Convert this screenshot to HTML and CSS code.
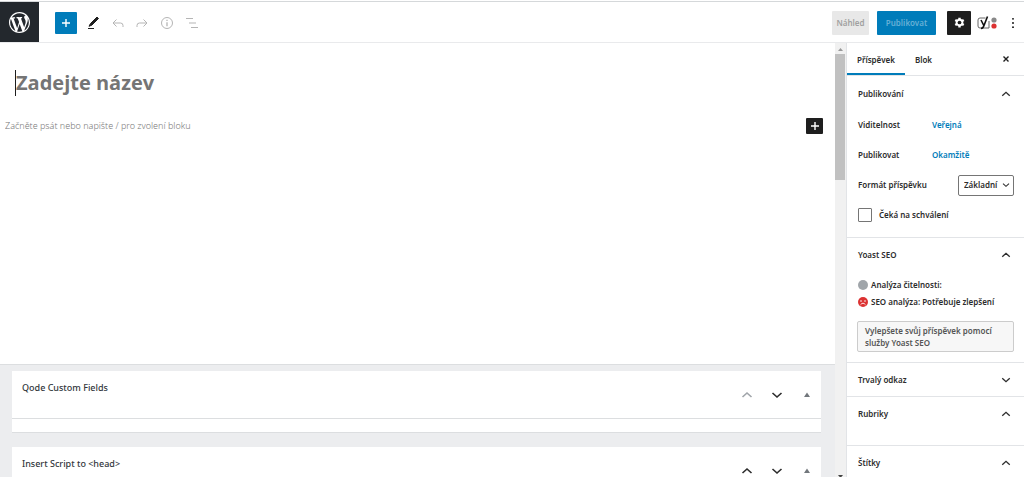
FILE: index.html
```html
<!DOCTYPE html>
<html lang="cs">
<head>
  <meta charset="UTF-8">
  <title>Nový příspěvek</title>
  <link rel="stylesheet" href="styles.css">
</head>
<body>
<svg class="sprite" aria-hidden="true">
  <symbol id="up" viewBox="0 0 12 12"><path d="M1.500 8L6 4l4.500 4" fill="none" stroke="currentColor" stroke-width="1.600"/></symbol>
  <symbol id="down" viewBox="0 0 12 12"><path d="M1.500 4L6 8l4.500-4" fill="none" stroke="currentColor" stroke-width="1.600"/></symbol>
  <symbol id="triangle" viewBox="0 0 12 12"><path d="M3 8l3-4.500L9 8z" fill="currentColor"/></symbol>
  <symbol id="plus" viewBox="0 0 12 12"><path d="M6 2v8M2 6h8" fill="none" stroke="currentColor" stroke-width="1.400"/></symbol>
</svg>

<header class="topbar">
  <a class="logo" href="#" aria-label="WordPress">
    <svg viewBox="0 0 20 20"><path fill="#fff" d="M20 10c0-5.510-4.490-10-10-10S0 4.490 0 10c0 5.520 4.490 10 10 10s10-4.480 10-10zM7.780 15.370L4.370 6.220c.55-.02 1.170-.08 1.170-.08.5-.06.44-1.130-.06-1.110 0 0-1.450.11-2.370.11-.18 0-.37 0-.58-.01C4.120 2.690 6.870 1.110 10 1.110c2.330 0 4.450.87 6.050 2.340-.68-.11-1.650.39-1.650 1.580 0 .74.45 1.360.9 2.100.35.61.55 1.360.55 2.460 0 1.490-1.400 5-1.400 5l-3.030-8.370c.54-.02.82-.17.82-.17.5-.05.44-1.250-.06-1.220 0 0-1.440.12-2.380.12-.87 0-2.330-.12-2.330-.12-.5-.03-.56 1.200-.06 1.220l.92.08 1.260 3.410zM17.410 10c.24-.64.74-1.870.43-4.250.7 1.290 1.050 2.710 1.050 4.250 0 3.290-1.730 6.240-4.400 7.780.97-2.590 1.940-5.200 2.920-7.780zM6.100 18.090C3.120 16.650 1.110 13.530 1.110 10c0-1.300.23-2.480.72-3.590C3.250 10.300 4.670 14.200 6.100 18.090zm4.030-6.630l2.580 6.980c-.86.29-1.760.45-2.710.45-.79 0-1.570-.11-2.290-.33.81-2.380 1.620-4.740 2.420-7.100z"/></svg>
  </a>
  <div class="tools">
    <button class="add" aria-label="Přidat blok"><svg class="icon"><use href="#plus"/></svg></button>
    <button class="tool dark" aria-label="Upravit"><svg viewBox="0 0 16 16"><path d="M5.500 8.500L12 2l1.500 1.500L7 10l-3 1.300z" fill="currentColor" stroke="currentColor"/><path d="M3 13.500h6" stroke="currentColor"/></svg></button>
    <button class="tool" aria-label="Zpět"><svg viewBox="0 0 16 16"><path d="M6.500 4.500L3 8l3.500 3.500M3 8h7.500Q13 8 13 10.500V12" fill="none" stroke="currentColor"/></svg></button>
    <button class="tool" aria-label="Znovu"><svg viewBox="0 0 16 16"><path d="M9.500 4.500L13 8l-3.500 3.500M13 8H5.500Q3 8 3 10.500V12" fill="none" stroke="currentColor"/></svg></button>
    <button class="tool info" aria-label="Podrobnosti"><svg viewBox="0 0 16 16"><circle cx="8" cy="8" r="5.500" fill="none" stroke="currentColor"/><path d="M8 7.200v4M8 4.800v1.300" stroke="currentColor" stroke-width="1.300"/></svg></button>
    <button class="tool info" aria-label="Osnova"><svg viewBox="0 0 16 16"><path d="M2 3.500h7M5 8h7M7 12.500h7" stroke="currentColor" stroke-width="1.200"/></svg></button>
  </div>
  <div class="actions">
    <button class="preview">Náhled</button>
    <button class="publish">Publikovat</button>
    <button class="settings" aria-label="Nastavení"><svg viewBox="0 0 16 16"><path d="M8 2v12M2.800 5l10.400 6M2.800 11l10.400-6" stroke="#fff" stroke-width="3"/><circle cx="8" cy="8" r="3.500" fill="none" stroke="#fff" stroke-width="2.400"/><circle cx="8" cy="8" r="2.300" fill="#1e1e1e"/></svg></button>
    <button class="yoast" aria-label="Yoast SEO"><svg viewBox="0 0 20 16"><path d="M8.500 3H3Q1 3 1 5v6q0 2 2 2h9V6" fill="none" stroke="#666"/><path d="M4 5l2.800 5.500M10.500 1.500L7 10.500q-1 3-3 3" fill="none" stroke="#111" stroke-width="1.600"/><circle cx="17" cy="5" r="2.600" fill="#888"/><circle cx="17" cy="11" r="2.600" fill="#dc3232"/></svg></button>
    <button class="more" aria-label="Možnosti"><svg viewBox="0 0 4 12"><circle cx="2" cy="1.800" r=".9"/><circle cx="2" cy="6" r=".9"/><circle cx="2" cy="10.200" r=".9"/></svg></button>
  </div>
</header>

<div class="layout">
  <main class="editor">
    <section class="canvas">
      <input class="post-title" type="text" placeholder="Zadejte název" aria-label="Název">
      <div class="block">
        <input class="post-text" type="text" placeholder="Začněte psát nebo napište / pro zvolení bloku" aria-label="Obsah">
        <button class="inserter" aria-label="Přidat blok"><svg class="icon"><use href="#plus"/></svg></button>
      </div>
    </section>
    <section class="metaboxes">
      <div class="metabox">
        <div class="metabox-head">
          <h2>Qode Custom Fields</h2>
          <div class="handles">
            <button class="off" aria-label="Nahoru"><svg class="icon"><use href="#up"/></svg></button>
            <button aria-label="Dolů"><svg class="icon"><use href="#down"/></svg></button>
            <button class="toggle" aria-label="Sbalit"><svg class="icon"><use href="#triangle"/></svg></button>
          </div>
        </div>
        <div class="metabox-body"></div>
      </div>
      <div class="metabox">
        <div class="metabox-head">
          <h2>Insert Script to &lt;head&gt;</h2>
          <div class="handles">
            <button aria-label="Nahoru"><svg class="icon"><use href="#up"/></svg></button>
            <button aria-label="Dolů"><svg class="icon"><use href="#down"/></svg></button>
            <button class="toggle" aria-label="Sbalit"><svg class="icon"><use href="#triangle"/></svg></button>
          </div>
        </div>
        <div class="metabox-body"></div>
      </div>
    </section>
  </main>

  <div class="scrollbar">
    <svg class="arrow" viewBox="0 0 11 11"><path d="M3 8l2.500-3L8 8z" fill="#999"/></svg>
    <div class="thumb"></div>
    <svg class="arrow last" viewBox="0 0 11 11"><path d="M3 9h5l-2.500 3z" fill="#444"/></svg>
  </div>

  <aside class="sidebar">
    <nav class="tabs">
      <button class="tab active">Příspěvek</button>
      <button class="tab">Blok</button>
      <button class="close" aria-label="Zavřít"><svg viewBox="0 0 8 8"><path d="M1.500 1.500l5 5M6.500 1.500l-5 5" stroke="#1e1e1e" stroke-width="1.400"/></svg></button>
    </nav>

    <section class="panel publishing">
      <button class="panel-title">Publikování<svg class="icon"><use href="#up"/></svg></button>
      <div class="row"><span class="name">Viditelnost</span><a href="#">Veřejná</a></div>
      <div class="row"><span class="name">Publikovat</span><a href="#">Okamžitě</a></div>
      <div class="row format">
        <label for="format">Formát příspěvku</label>
        <div class="select">
          <select id="format"><option>Základní</option></select>
          <svg class="icon"><use href="#down"/></svg>
        </div>
      </div>
      <div class="row"><input id="pending" type="checkbox"><label for="pending">Čeká na schválení</label></div>
    </section>

    <section class="panel seo">
      <button class="panel-title">Yoast SEO<svg class="icon"><use href="#up"/></svg></button>
      <ul>
        <li><svg viewBox="0 0 10 10"><circle cx="5" cy="5" r="5" fill="#a0a5aa"/></svg>Analýza čitelnosti:</li>
        <li><svg viewBox="0 0 10 10"><circle cx="5" cy="5" r="5" fill="#dc3232"/><path d="M2.500 7.800Q5 4.600 7.500 7.800" fill="none" stroke="#fff" stroke-width=".9"/><circle cx="3" cy="4" r=".8" fill="#fff"/><circle cx="7" cy="4" r=".8" fill="#fff"/></svg>SEO analýza: Potřebuje zlepšení</li>
      </ul>
      <button class="improve">Vylepšete svůj příspěvek pomocí služby Yoast SEO</button>
    </section>

    <section class="panel"><button class="panel-title">Trvalý odkaz<svg class="icon"><use href="#down"/></svg></button></section>
    <section class="panel categories"><button class="panel-title">Rubriky<svg class="icon"><use href="#up"/></svg></button></section>
    <section class="panel"><button class="panel-title">Štítky<svg class="icon"><use href="#up"/></svg></button></section>
  </aside>
</div>
</body>
</html>
```
FILE: styles.css
```css
* {box-sizing:border-box;}
body, h2, ul {margin:0; padding:0;}
ul {list-style:none;}
button, input, select {margin:0; padding:0; border:0; font:inherit; color:inherit; background:none;}
button {display:flex; align-items:center; justify-content:center;}
a {color:#007cba; text-decoration:none;}

body {display:flex; flex-direction:column; height:100vh; overflow:hidden; padding-top:1px;
      font:600 8px/12px "Noto Sans", "Open Sans", sans-serif; color:#2c2c2c; background:#fff;}
.sprite {display:none;}
.icon {width:12px; height:12px; flex:none;}

.topbar {display:flex; flex:none; align-items:center; height:42px; border-top:1px solid #d5d8da; border-bottom:1px solid #e9eaec;}
.logo {display:flex; align-items:center; justify-content:center; align-self:stretch; width:39px; background:#23282d;}
.logo svg {width:21px; height:21px;}
.tools {display:flex; align-items:center; gap:8px; margin-left:16px; padding-top:1px;}
.add {width:22px; height:22px; border-radius:1px; color:#fff; background:#007cba;}
.tool {width:16px; height:22px; color:#b5b5b5;}
.tool svg {width:16px; height:16px;}
.dark {margin-right:1px; color:#1e1e1e;}
.info {width:17px;}
.actions {display:flex; align-items:center; margin-left:auto; padding:1px 7px 0 0;}
.preview {width:37px; height:24px; border-radius:1px; color:#a0a0a0; background:#e8e8e8;}
.publish {width:59px; height:24px; margin-left:8px; border-radius:1px; color:#66b0d6; background:#007cba;}
.settings {width:24px; height:24px; margin-left:11px; border-radius:1px; background:#1e1e1e;}
.settings svg {width:13px; height:13px;}
.yoast {margin-left:6px;}
.yoast svg {width:20px; height:16px;}
.more {width:8px; height:24px; margin-left:12px;}
.more svg {width:4px; height:12px;}

.layout {display:flex; flex:1; min-height:0;}
.editor {flex:1; min-width:0; overflow:hidden;}
.canvas {height:321px; padding-top:27px;}
.post-title {display:block; width:80%; height:26px; margin-left:15px; border-left:1px solid #1e1e1e; outline:0;
             font:700 20px/26px "Open Sans", sans-serif; color:#757575;}
.post-title::placeholder {color:#757575; opacity:1;}
.block {display:flex; align-items:center; justify-content:space-between; margin-top:22px; padding:0 12px 0 5px;}
.post-text {flex:1; height:16px; font:300 9px/16px "Noto Sans", "Open Sans", sans-serif; outline:0;}
.post-text::placeholder {color:#777; opacity:1;}
.inserter {width:17px; height:16px; border-radius:1px; color:#fff; background:#1e1e1e;}

.metaboxes {padding:6px 14px 14px 12px; border-top:1px solid #dcdee0; background:#ecedef;}
.metabox {margin-bottom:14px; border-bottom:1px solid #dcdee0; background:#fff;}
.metabox-head {display:flex; justify-content:space-between; height:48px; border-bottom:1px solid #dcdee0;}
.metabox-head h2 {padding:11px 10px; font-size:9px; line-height:12px; font-weight:500; color:#32373c;}
.metabox-body {height:13px;}
.handles {display:flex; gap:18px; padding:18px 8px 0 0;}
.handles button {width:12px; height:12px;}
.handles .off {color:#a0a5aa;}
.handles .toggle {color:#72777c;}

.scrollbar {display:flex; flex:none; flex-direction:column; width:11px; background:#f1f1f1;}
.arrow {width:11px; height:11px;}
.last {margin-top:auto; overflow:hidden;}
.thumb {height:126px; margin-right:1px; background:#c1c1c1;}

.sidebar {flex:none; width:178px; overflow:hidden; border-left:1px solid #e2e4e7;}
.tabs {display:flex; height:33px; border-bottom:1px solid #e2e4e7;}
.tab {padding:4px 10px 0; border-bottom:2px solid transparent;}
.active {border-color:#007cba;}
.close {width:12px; margin:0 12px 0 auto;}
.close svg {width:8px; height:8px;}

.panel {padding:0 10px; border-bottom:1px solid #e2e4e7;}
.panel-title {justify-content:space-between; width:100%; height:33px; padding:0 3px 0 1px; text-align:left;}
.panel-title .icon, .select .icon {width:10px; height:10px;}
.row {display:flex; align-items:center; height:30px; padding-left:1px;}
.name {width:74px;}
.publishing {padding:1px 10px 7px;}
.format {justify-content:space-between;}
.select {position:relative; width:56px;}
.select select {display:block; width:100%; height:21px; padding:0 14px 0 5px; border:1px solid #757575; border-radius:2px; appearance:none;}
.select .icon {position:absolute; top:6px; right:4px; width:8px; height:8px; pointer-events:none;}
.row input {width:14px; height:14px; margin-right:7px; border:1px solid #757575; border-radius:1px; appearance:none;}

.seo {padding-bottom:10px;}
.seo ul {padding:5px 0 11px 1px;}
.seo li {display:flex; align-items:center; gap:3px; height:17px; white-space:nowrap;}
.seo li svg {width:10px; height:10px;}
.improve {width:100%; height:31px; padding:0 7px; border:1px solid #ccc; border-radius:2px; text-align:left; color:#555; background:#f7f7f7;}
.categories {padding-bottom:15px;}
```
